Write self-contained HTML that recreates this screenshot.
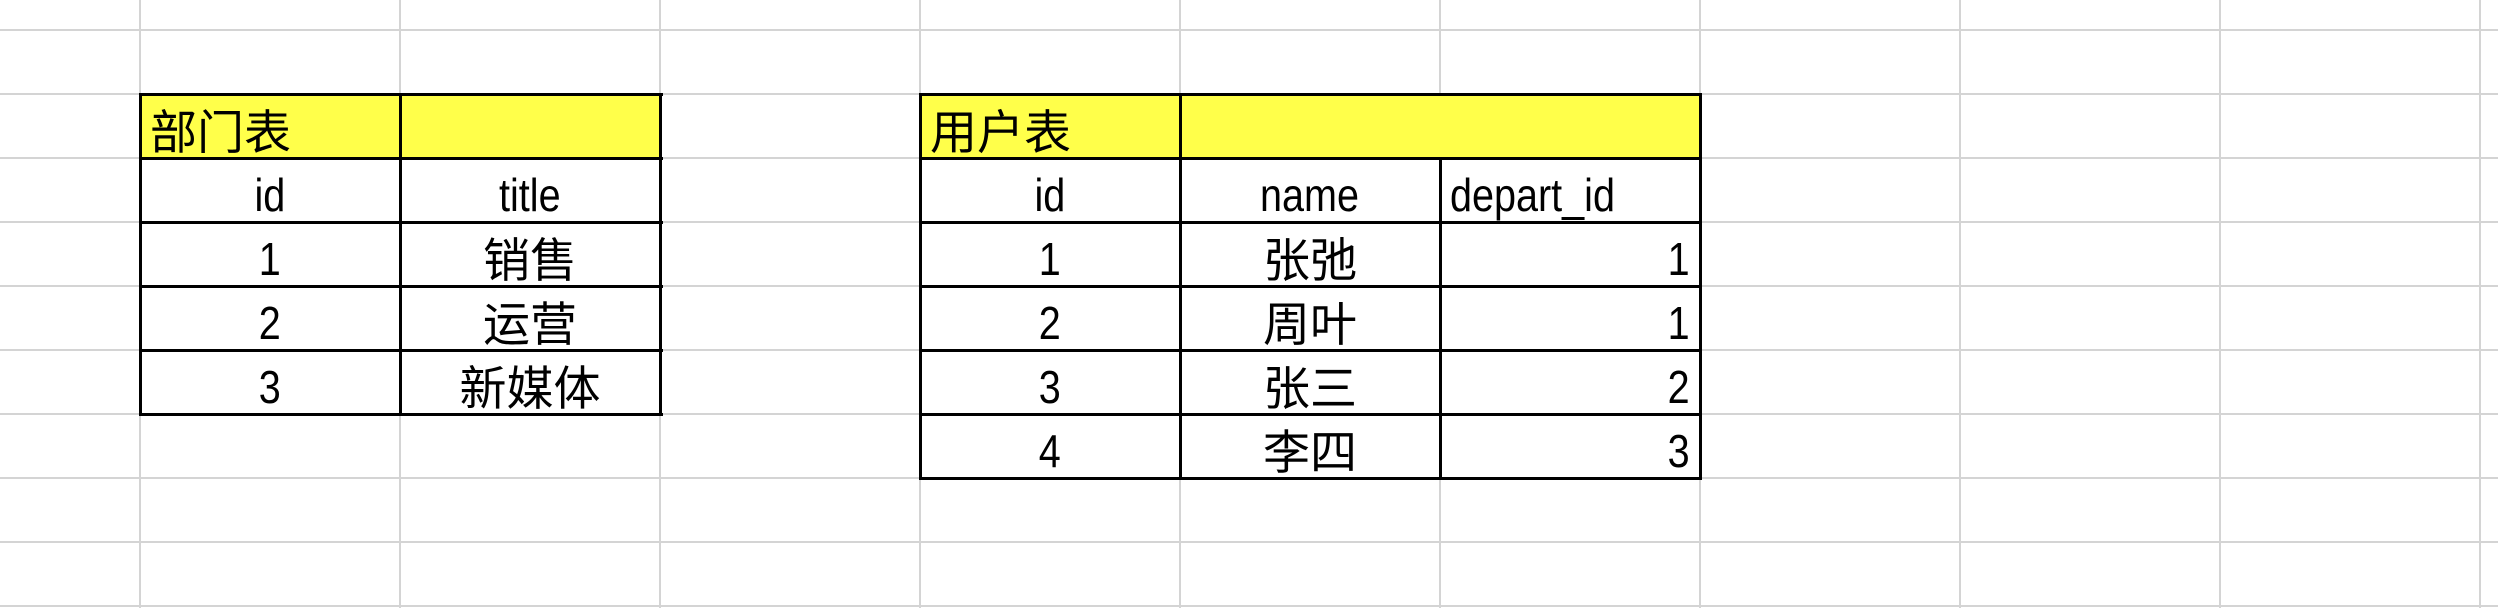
<!DOCTYPE html>
<html><head><meta charset="utf-8"><style>
body{margin:0;width:2498px;height:608px;background:#fff;position:relative;overflow:hidden;font-family:"Liberation Sans","Noto Sans CJK SC",sans-serif;}
.v{position:absolute;top:0;height:608px;width:2px;background:#d4d4d4;}
.h{position:absolute;left:0;width:2498px;height:2px;background:#d4d4d4;}
.y{position:absolute;background:#ffff4a;}
.bv{position:absolute;width:3px;background:#000;}
.bh{position:absolute;height:3px;background:#000;}
.c{position:absolute;height:64px;display:flex;align-items:flex-end;justify-content:center;font-size:46px;line-height:1;padding-bottom:4px;box-sizing:border-box;color:#000;}
.c span{display:inline-block;transform:scaleX(0.86);}
.l{justify-content:flex-start;padding-left:10px;}
.l span{transform-origin:left bottom;}
.r{justify-content:flex-end;padding-right:10px;}
.r span{transform-origin:right bottom;}
.cj{font-size:47px;padding-bottom:2px;}
.cj span{transform:none;}
</style></head><body>
<div class="v" style="left:139px"></div><div class="v" style="left:399px"></div><div class="v" style="left:659px"></div><div class="v" style="left:919px"></div><div class="v" style="left:1179px"></div><div class="v" style="left:1439px"></div><div class="v" style="left:1699px"></div><div class="v" style="left:1959px"></div><div class="v" style="left:2219px"></div><div class="v" style="left:2479px"></div>
<div class="h" style="top:29px"></div><div class="h" style="top:93px"></div><div class="h" style="top:157px"></div><div class="h" style="top:221px"></div><div class="h" style="top:285px"></div><div class="h" style="top:349px"></div><div class="h" style="top:413px"></div><div class="h" style="top:477px"></div><div class="h" style="top:541px"></div><div class="h" style="top:605px"></div>

<div class="y" style="left:140px;top:94px;width:521px;height:64px"></div>
<div class="y" style="left:920px;top:94px;width:780px;height:64px"></div>

<div class="bh" style="left:139px;top:93px;width:524px"></div>
<div class="bh" style="left:139px;top:157px;width:524px"></div>
<div class="bh" style="left:139px;top:221px;width:524px"></div>
<div class="bh" style="left:139px;top:285px;width:524px"></div>
<div class="bh" style="left:139px;top:349px;width:524px"></div>
<div class="bh" style="left:139px;top:413px;width:524px"></div>
<div class="bv" style="left:139px;top:93px;height:323px"></div>
<div class="bv" style="left:399px;top:93px;height:323px"></div>
<div class="bv" style="left:659px;top:93px;height:323px"></div>

<div class="bh" style="left:919px;top:93px;width:783px"></div>
<div class="bh" style="left:919px;top:157px;width:783px"></div>
<div class="bh" style="left:919px;top:221px;width:783px"></div>
<div class="bh" style="left:919px;top:285px;width:783px"></div>
<div class="bh" style="left:919px;top:349px;width:783px"></div>
<div class="bh" style="left:919px;top:413px;width:783px"></div>
<div class="bh" style="left:919px;top:477px;width:783px"></div>
<div class="bv" style="left:919px;top:93px;height:387px"></div>
<div class="bv" style="left:1179px;top:93px;height:387px"></div>
<div class="bv" style="left:1439px;top:157px;height:323px"></div>
<div class="bv" style="left:1699px;top:93px;height:387px"></div>

<div class="c l cj" style="left:140px;top:94px;width:260px"><span>部门表</span></div>
<div class="c" style="left:140px;top:158px;width:260px"><span>id</span></div>
<div class="c" style="left:400px;top:158px;width:260px"><span>title</span></div>
<div class="c" style="left:140px;top:222px;width:260px"><span>1</span></div>
<div class="c cj" style="left:400px;top:222px;width:260px"><span>销售</span></div>
<div class="c" style="left:140px;top:286px;width:260px"><span>2</span></div>
<div class="c cj" style="left:400px;top:286px;width:260px"><span>运营</span></div>
<div class="c" style="left:140px;top:350px;width:260px"><span>3</span></div>
<div class="c cj" style="left:400px;top:350px;width:260px"><span>新媒体</span></div>

<div class="c l cj" style="left:920px;top:94px;width:260px"><span>用户表</span></div>
<div class="c" style="left:920px;top:158px;width:260px"><span>id</span></div>
<div class="c" style="left:1180px;top:158px;width:260px"><span>name</span></div>
<div class="c l" style="left:1440px;top:158px;width:260px"><span>depart_id</span></div>
<div class="c" style="left:920px;top:222px;width:260px"><span>1</span></div>
<div class="c cj" style="left:1180px;top:222px;width:260px"><span>张弛</span></div>
<div class="c r" style="left:1440px;top:222px;width:260px"><span>1</span></div>
<div class="c" style="left:920px;top:286px;width:260px"><span>2</span></div>
<div class="c cj" style="left:1180px;top:286px;width:260px"><span>周叶</span></div>
<div class="c r" style="left:1440px;top:286px;width:260px"><span>1</span></div>
<div class="c" style="left:920px;top:350px;width:260px"><span>3</span></div>
<div class="c cj" style="left:1180px;top:350px;width:260px"><span>张三</span></div>
<div class="c r" style="left:1440px;top:350px;width:260px"><span>2</span></div>
<div class="c" style="left:920px;top:414px;width:260px"><span>4</span></div>
<div class="c cj" style="left:1180px;top:414px;width:260px"><span>李四</span></div>
<div class="c r" style="left:1440px;top:414px;width:260px"><span>3</span></div>
</body></html>
